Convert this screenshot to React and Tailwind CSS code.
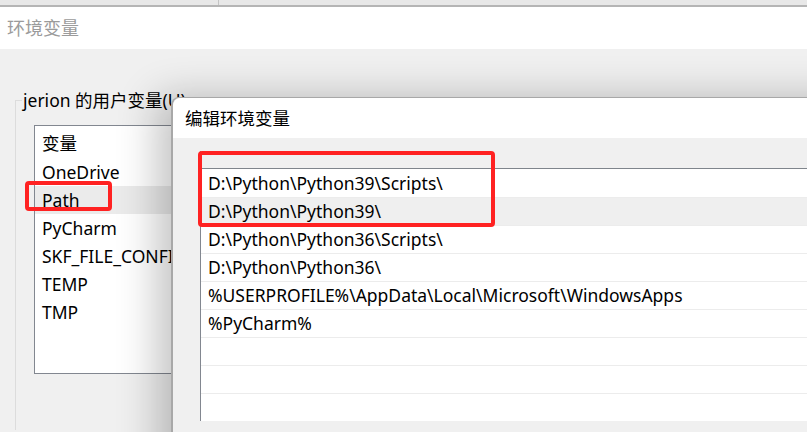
export default function App() {
  const userVars = ["OneDrive", "Path", "PyCharm", "SKF_FILE_CONFIG", "TEMP", "TMP"];
  const pathRows = [
    "D:\\Python\\Python39\\Scripts\\",
    "D:\\Python\\Python39\\",
    "D:\\Python\\Python36\\Scripts\\",
    "D:\\Python\\Python36\\",
    "%USERPROFILE%\\AppData\\Local\\Microsoft\\WindowsApps",
    "%PyCharm%",
    "",
    "",
    "",
  ];

  return (
    <div className="relative w-[807px] h-[432px] overflow-hidden bg-[#f0f0f0] font-['Noto_Sans','Noto_Sans_CJK_SC',sans-serif] text-[17.5px] text-black">
      {/* window behind */}
      <div className="flex h-[5px] bg-[#e8e8e8]">
        <div className="w-[219px] border-r border-[#c4c4c4]" />
      </div>
      <div className="h-[2px] bg-[#b5b5b5]" />

      {/* 环境变量 window */}
      <div className="h-[42px] bg-white flex items-center pl-[7px] text-[18px] text-[#9b9b9b]">
        环境变量
      </div>

      <div className="pl-[15px] pt-[41px]">
        <fieldset className="border-l border-t border-[#dcdcdc] h-[340px]">
          <legend className="ml-[6px] px-[1px] leading-[20px]">jerion 的用户变量(U)</legend>
          <div className="ml-[18px] mt-[15px] w-[300px] h-[249px] border border-[#828790] bg-white">
            <div className="h-[32px] flex items-center pl-[7px] pt-[2px]">变量</div>
            {userVars.map((v) => (
              <div
                key={v}
                className={`h-[28px] flex items-center pl-[7px] ${v === "Path" ? "bg-[#ebebeb]" : ""}`}
              >
                {v}
              </div>
            ))}
          </div>
        </fieldset>
      </div>

      {/* 编辑环境变量 dialog */}
      <div className="absolute left-[171px] top-[97px] w-[700px] h-[400px] flex flex-col rounded-tl-[8px] border-l-2 border-t border-[#a8a8a8] bg-[#f0f0f0] shadow-[-14px_0_40px_rgba(0,0,0,0.24)]">
        <div className="h-[40px] rounded-tl-[8px] bg-white flex items-center pl-[12px]">编辑环境变量</div>
        <div className="pl-[27px] pt-[13px]">
          <div className="border-l border-[#828790] bg-white">
            <div className="h-[18px] bg-[#f0f0f0] border-b border-[#7f858c]" />
            {pathRows.map((p, i) => (
              <div
                key={i}
                className={`h-[28px] flex items-center pl-[7px] ${i === 1 ? "bg-[#efefef]" : ""} ${i >= 1 ? "border-t border-[#ececec]" : ""}`}
              >
                {p}
              </div>
            ))}
          </div>
        </div>
      </div>

      {/* red annotation boxes */}
      <div className="absolute left-[25px] top-[181px] w-[87px] h-[30px] border-4 border-[#ff2222] rounded-[4px]" />
      <div className="absolute left-[198px] top-[151px] w-[297px] h-[76px] border-4 border-[#ff2222] rounded-[4px]" />
    </div>
  );
}
